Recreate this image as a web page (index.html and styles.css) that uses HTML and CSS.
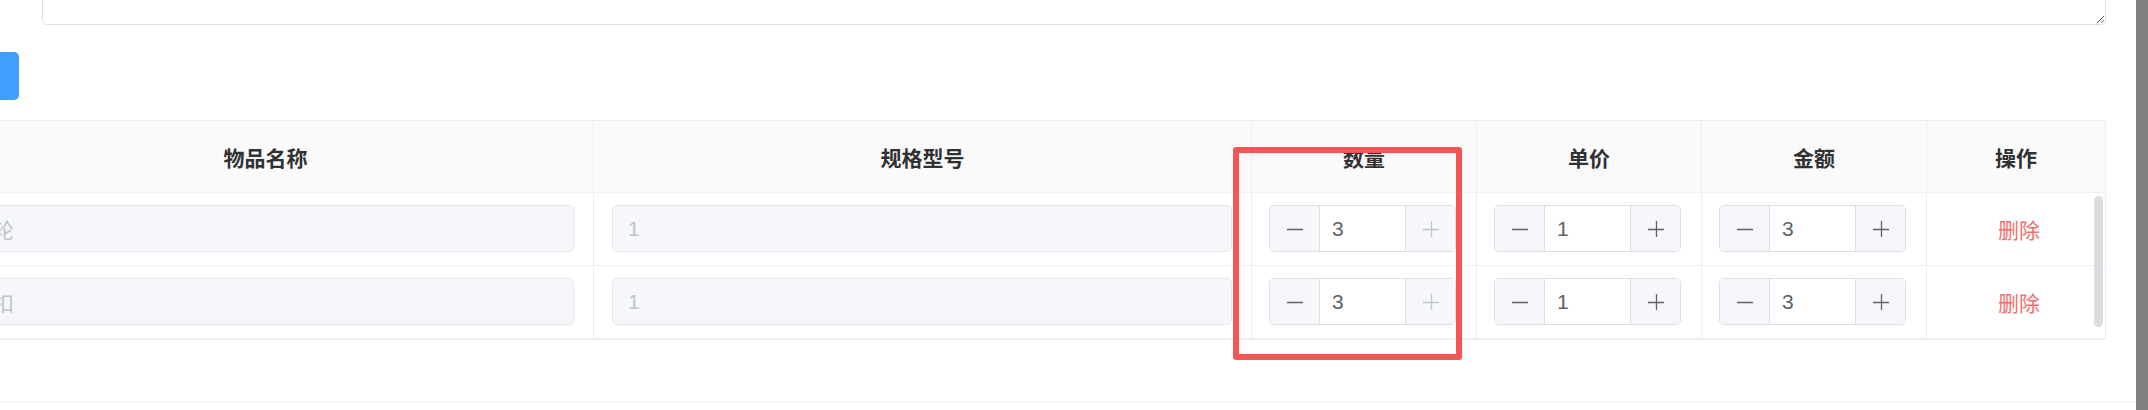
FILE: index.html
```html
<!DOCTYPE html>
<html lang="zh-CN">
<head>
<meta charset="utf-8">
<title>物品清单</title>
<link rel="stylesheet" href="styles.css">
</head>
<body>
<div class="page">
  <textarea class="remark"></textarea>
  <div class="toolbar"><button class="btn-primary">添加</button></div>

  <div class="table">
    <div class="row head">
      <div class="th">物品名称</div>
      <div class="th">规格型号</div>
      <div class="th">数量</div>
      <div class="th">单价</div>
      <div class="th">金额</div>
      <div class="th">操作</div>
    </div>
    <div class="tbody">
      <div class="row">
        <div class="td text"><div class="input disabled">齿轮</div></div>
        <div class="td text"><div class="input disabled">1</div></div>
        <div class="td num">
          <div class="stepper">
            <span class="dec"><svg viewBox="0 0 16 16"><path d="M0 8.5H16"/></svg></span>
            <span class="val">3</span>
            <span class="inc off"><svg viewBox="0 0 16 16"><path d="M0 8.5H16M8.5 0V16"/></svg></span>
          </div>
        </div>
        <div class="td num">
          <div class="stepper">
            <span class="dec"><svg viewBox="0 0 16 16"><path d="M0 8.5H16"/></svg></span>
            <span class="val">1</span>
            <span class="inc"><svg viewBox="0 0 16 16"><path d="M0 8.5H16M8.5 0V16"/></svg></span>
          </div>
        </div>
        <div class="td num">
          <div class="stepper">
            <span class="dec"><svg viewBox="0 0 16 16"><path d="M0 8.5H16"/></svg></span>
            <span class="val">3</span>
            <span class="inc"><svg viewBox="0 0 16 16"><path d="M0 8.5H16M8.5 0V16"/></svg></span>
          </div>
        </div>
        <div class="td op"><a class="del">删除</a></div>
      </div>
      <div class="row">
        <div class="td text"><div class="input disabled">纽扣</div></div>
        <div class="td text"><div class="input disabled">1</div></div>
        <div class="td num">
          <div class="stepper">
            <span class="dec"><svg viewBox="0 0 16 16"><path d="M0 8.5H16"/></svg></span>
            <span class="val">3</span>
            <span class="inc off"><svg viewBox="0 0 16 16"><path d="M0 8.5H16M8.5 0V16"/></svg></span>
          </div>
        </div>
        <div class="td num">
          <div class="stepper">
            <span class="dec"><svg viewBox="0 0 16 16"><path d="M0 8.5H16"/></svg></span>
            <span class="val">1</span>
            <span class="inc"><svg viewBox="0 0 16 16"><path d="M0 8.5H16M8.5 0V16"/></svg></span>
          </div>
        </div>
        <div class="td num">
          <div class="stepper">
            <span class="dec"><svg viewBox="0 0 16 16"><path d="M0 8.5H16"/></svg></span>
            <span class="val">3</span>
            <span class="inc"><svg viewBox="0 0 16 16"><path d="M0 8.5H16M8.5 0V16"/></svg></span>
          </div>
        </div>
        <div class="td op"><a class="del">删除</a></div>
      </div>
      <div class="thumb"></div>
    </div>
  </div>

  <div class="footer"></div>
  <div class="highlight"></div>
</div>
<div class="vscroll"></div>
</body>
</html>
```

FILE: styles.css
```css
* { box-sizing: border-box; }
html, body { margin: 0; padding: 0; }
body {
  display: flex;
  width: 2148px;
  height: 410px;
  overflow: hidden;
  background: #fff;
  font-family: "Liberation Sans", "Noto Sans CJK SC", Arial, sans-serif;
  color: #606266;
}
.page {
  position: relative;
  flex: 1;
  min-width: 0;
  overflow: hidden;
}
.vscroll {
  width: 12px;
  flex: none;
  background: #7f7f7f;
}

.remark {
  display: block;
  margin: -55px 0 0 42px;
  width: 2064px;
  height: 80px;
  border: 1px solid #dcdfe6;
  border-radius: 5px;
  background: #fff;
  outline: none;
  resize: vertical;
}

.toolbar { margin-top: 27px; display: flex; }
.btn-primary {
  margin-left: -80px;
  width: 99px;
  height: 48px;
  border: 0;
  border-radius: 5px;
  background: #409eff;
  color: #fff;
  font-size: 19px;
  font-family: "Noto Sans CJK SC", sans-serif;
  padding: 0 40px 0 0;
  text-align: left;
  text-indent: 12px;
}

.table {
  margin: 20px 0 0 -63px;
  width: 2169px;
  border-left: 1px solid #ebeef5;
  border-top: 1px solid #ebeef5;
  border-bottom: 1px solid #ebeef5;
}
.row {
  display: grid;
  grid-template-columns: 656px 658px 225px 225px 225px 179px;
}
.th, .td {
  border-right: 1px solid #ebeef5;
  border-bottom: 1px solid #ebeef5;
}
.th {
  height: 72px;
  background: #fafafa;
  display: flex;
  align-items: center;
  justify-content: center;
  font-family: "Noto Sans CJK SC", sans-serif;
  font-weight: 700;
  font-size: 21px;
  color: #303133;
}
.tbody { position: relative; }
.td {
  padding: 12px 19px 13px 18px;
}
.td.num { padding-left: 17px; }
.td.op {
  display: flex;
  align-items: center;
  justify-content: center;
  padding-left: 22px;
  padding-right: 16px;
}

.input {
  height: 47px;
  border: 1px solid #e4e7ed;
  border-radius: 5px;
  background: #f5f7fa;
  padding: 0 15px;
  display: flex;
  align-items: center;
  font-size: 21px;
  color: #c0c4cc;
  font-family: "Liberation Sans", "Noto Sans CJK SC", sans-serif;
  white-space: nowrap;
}

.stepper {
  width: 187px;
  height: 47px;
  display: flex;
  border: 1px solid #dcdfe6;
  border-radius: 5px;
  overflow: hidden;
  background: #fff;
}
.dec, .inc {
  width: 50px;
  flex: none;
  background: #f5f7fa;
  display: flex;
  align-items: center;
  justify-content: center;
  color: #606266;
}
.dec { border-right: 1px solid #dcdfe6; }
.inc { border-left: 1px solid #dcdfe6; }
.inc.off { color: #c0c4cc; }
.dec svg, .inc svg {
  width: 16px;
  height: 16px;
  fill: none;
  stroke: currentColor;
  stroke-width: 1.3;
}
.val {
  flex: 1;
  display: flex;
  align-items: center;
  padding-left: 12px;
  font-size: 21px;
  color: #606266;
}

.del {
  font-family: "Noto Sans CJK SC", sans-serif;
  font-size: 21px;
  color: #f56c6c;
  cursor: pointer;
}

.thumb {
  position: absolute;
  right: 3px;
  top: 3px;
  bottom: 12px;
  width: 9px;
  border-radius: 5px;
  background: #dcdde0;
}

.footer {
  margin-top: 61px;
  border-top: 1px solid #ebeef5;
  height: 20px;
}

.highlight {
  position: absolute;
  left: 1233px;
  top: 147px;
  width: 229px;
  height: 213px;
  border: 6px solid #f55555;
  border-radius: 3px;
}
```
